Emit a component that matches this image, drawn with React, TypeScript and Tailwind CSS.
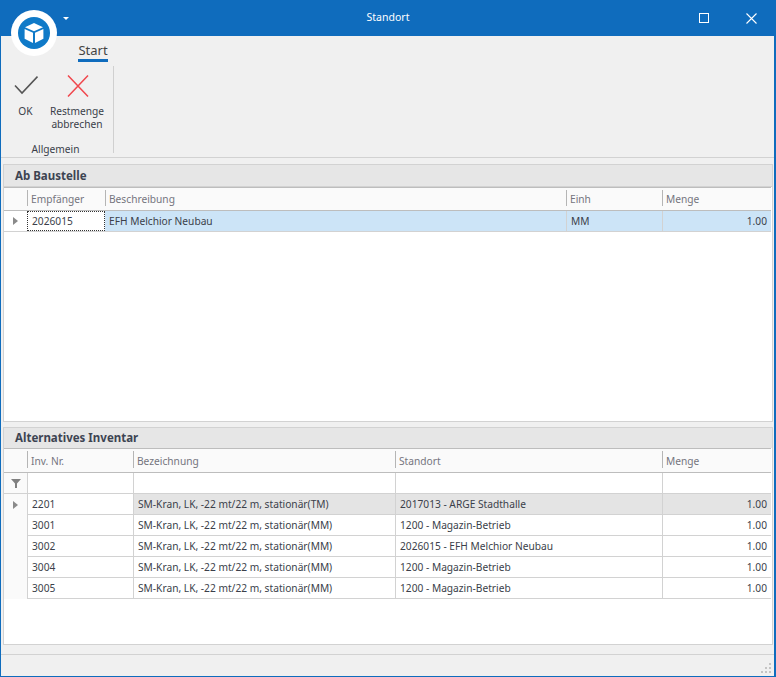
const font = "font-['Noto_Sans','Liberation_Sans',sans-serif]";
const topCols = "grid grid-cols-[23px_78px_461px_96px_1fr] mr-px";
const bottomCols = "grid grid-cols-[23px_106px_262px_267px_1fr] mr-px";

const inventory = [
  { nr: "2201", name: "SM-Kran, LK, -22 mt/22 m, stationär(TM)", place: "2017013 - ARGE Stadthalle" },
  { nr: "3001", name: "SM-Kran, LK, -22 mt/22 m, stationär(MM)", place: "1200 - Magazin-Betrieb" },
  { nr: "3002", name: "SM-Kran, LK, -22 mt/22 m, stationär(MM)", place: "2026015 - EFH Melchior Neubau" },
  { nr: "3004", name: "SM-Kran, LK, -22 mt/22 m, stationär(MM)", place: "1200 - Magazin-Betrieb" },
  { nr: "3005", name: "SM-Kran, LK, -22 mt/22 m, stationär(MM)", place: "1200 - Magazin-Betrieb" },
];

function HeadCell({ label }: { label: string }) {
  return (
    <div className="relative flex items-center pl-[4px] pt-[2px] text-[#75757e]">
      <span className="absolute left-0 top-[2px] bottom-[4px] w-px bg-[#b5b5b5]" />
      {label}
    </div>
  );
}

function RowMarker() {
  return <div className="w-0 h-0 border-y-[4px] border-y-transparent border-l-[5px] border-l-[#8a8a8a]" />;
}

export default function App() {
  return (
    <div className={`${font} w-[776px] h-[677px] flex flex-col bg-[#f0f0f0] border-l border-r-2 border-b border-[#0f6cbd] text-[10.2px] text-[#3b3f4a] overflow-hidden`}>
      {/* title bar */}
      <div className="relative -ml-px -mr-[2px] h-[36px] shrink-0 bg-[#0f6cbd] flex items-center justify-center text-white text-[10.5px]">
        Standort
        <div className="absolute left-[11px] top-[10px] w-[46px] h-[46px] rounded-full bg-white flex items-center justify-center z-10">
          <div className="w-[32px] h-[32px] rounded-full bg-[#0f7ac8] flex items-center justify-center">
            <svg width="24" height="24" viewBox="0 0 24 24" fill="white">
              <path d="M12 2 L21 6.3 L12 10.2 L3 6.3 Z" />
              <path d="M2.6 8 L11 11.8 L11 22 L2.6 17.8 Z" />
              <path d="M21.4 8 L13 11.8 L13 22 L21.4 17.8 Z" />
            </svg>
          </div>
        </div>
        <div className="absolute left-[63px] top-[17px] w-0 h-0 border-x-[3px] border-x-transparent border-t-[3px] border-t-white" />
        <div className="absolute left-[699px] top-[13px] w-[10px] h-[10px] border border-white" />
        <svg className="absolute left-[746px] top-[13px]" width="11" height="11" viewBox="0 0 11 11" stroke="white" strokeWidth="1.1">
          <path d="M0.5 0.5 L10.5 10.5 M10.5 0.5 L0.5 10.5" />
        </svg>
      </div>

      {/* ribbon */}
      <div className="h-[122px] shrink-0 border-b border-[#d2d2d2] flex flex-col">
        <div className="h-[30px] pl-[77px] pt-[6px] shrink-0">
          <div className="w-[30px] h-[20px] border-b-[3px] border-[#0f6cbd] text-[13px] leading-[17px] text-[#444] text-center">Start</div>
        </div>
        <div className="flex items-start">
          <div className="w-[113px] h-[87px] border-r border-[#d0d0d0] flex flex-col">
            <div className="flex h-[72px] flex-none">
              <div className="w-[47px] pt-[9px] flex flex-col items-center">
                <svg className="ml-[2px]" width="24" height="20" viewBox="0 0 24 20" fill="none" stroke="#555" strokeWidth="1.6">
                  <path d="M1 10.5 L8 18 L23.5 1.5" />
                </svg>
                <div className="mt-[10px] ml-[2px] leading-[13px]">OK</div>
              </div>
              <div className="w-[58px] pt-[9px] flex flex-col items-center">
                <svg className="ml-[2px]" width="22" height="22" viewBox="0 0 22 22" fill="none" stroke="#f0484e" strokeWidth="1.5">
                  <path d="M1 0.5 L21 21.5 M21 0.5 L1 21.5" />
                </svg>
                <div className="mt-[8px] leading-[13px] text-center">Restmenge<br />abbrechen</div>
              </div>
            </div>
            <div className="w-[109px] text-center leading-[13px] mt-[5px] flex-none">Allgemein</div>
          </div>
        </div>
      </div>

      {/* Ab Baustelle */}
      <div className="mt-[6px] ml-[2px] mr-px h-[258px] shrink-0 border-x border-b border-[#d2d2d2] bg-white flex flex-col">
        <div className="h-[23px] bg-[#e6e6e6] border-y border-[#d2d2d2] flex items-center pl-[11px] text-[11.5px] font-bold text-[#3d4452]">
          Ab Baustelle
        </div>
        <div className={`${topCols} h-[24px] border-t border-b border-[#bdbdbd] bg-[#fafafa]`}>
          <div />
          <HeadCell label="Empfänger" />
          <HeadCell label="Beschreibung" />
          <HeadCell label="Einh" />
          <HeadCell label="Menge" />
        </div>
        <div className={`${topCols} h-[21px] border-b border-[#d2d2d2] bg-[#cce4f7]`}>
          <div className="bg-white flex items-center justify-center"><RowMarker /></div>
          <div className="bg-white border border-dotted border-[#333] flex items-center pl-[4px] pt-[2px]">2026015</div>
          <div className="flex items-center pl-[4px] pt-[2px]">EFH Melchior Neubau</div>
          <div className="flex items-center pl-[4px] pt-[2px] border-l border-[#d2d2d2]">MM</div>
          <div className="flex items-center justify-end pr-[4px] pt-[2px] border-l border-[#d2d2d2]">1.00</div>
        </div>
      </div>

      {/* Alternatives Inventar */}
      <div className="mt-[5px] ml-[2px] mr-px h-[218px] shrink-0 border-x border-b border-[#d2d2d2] bg-white flex flex-col">
        <div className="h-[21px] bg-[#e6e6e6] border-t border-[#d2d2d2] flex items-center pl-[11px] text-[11.5px] font-bold text-[#3d4452]">
          Alternatives Inventar
        </div>
        <div className={`${bottomCols} h-[25px] border-t border-b border-[#bdbdbd] bg-[#fafafa]`}>
          <div />
          <HeadCell label="Inv. Nr." />
          <HeadCell label="Bezeichnung" />
          <HeadCell label="Standort" />
          <HeadCell label="Menge" />
        </div>
        <div className={`${bottomCols} h-[21px] border-b border-[#d2d2d2]`}>
          <div className="bg-[#fafafa] flex items-center justify-center">
            <svg width="10" height="9" viewBox="0 0 10 9" fill="#808080">
              <path d="M0 0 H10 L6 4.5 V9 H4 V4.5 Z" />
            </svg>
          </div>
          <div className="border-l border-[#d2d2d2]" />
          <div className="border-l border-[#d2d2d2]" />
          <div className="border-l border-[#d2d2d2]" />
          <div className="border-l border-[#d2d2d2]" />
        </div>
        {inventory.map((row, i) => (
          <div key={row.nr} className={`${bottomCols} h-[21px]`}>
            <div className="bg-[#fafafa] flex items-center justify-center">{i === 0 && <RowMarker />}</div>
            <div className="flex items-center pl-[4px] pt-[2px] border-l border-b border-[#d2d2d2]">{row.nr}</div>
            <div className={`flex items-center pl-[4px] pt-[2px] border-l border-b border-[#d2d2d2] whitespace-nowrap ${i === 0 ? "bg-[#e4e4e4]" : ""}`}>{row.name}</div>
            <div className={`flex items-center pl-[4px] pt-[2px] border-l border-b border-[#d2d2d2] ${i === 0 ? "bg-[#e4e4e4]" : ""}`}>{row.place}</div>
            <div className={`flex items-center justify-end pr-[4px] pt-[2px] border-l border-b border-[#d2d2d2] ${i === 0 ? "bg-[#e4e4e4]" : ""}`}>1.00</div>
          </div>
        ))}
      </div>

      {/* status bar */}
      <div className="mt-[9px] flex-1 border-t border-[#d2d2d2] relative">
        <svg className="absolute right-[1px] bottom-[1px]" width="12" height="12" viewBox="0 0 12 12" fill="#c4c4c4">
          <rect x="8" y="0" width="2" height="2" />
          <rect x="4" y="4" width="2" height="2" />
          <rect x="8" y="4" width="2" height="2" />
          <rect x="0" y="8" width="2" height="2" />
          <rect x="4" y="8" width="2" height="2" />
          <rect x="8" y="8" width="2" height="2" />
        </svg>
      </div>
    </div>
  );
}
